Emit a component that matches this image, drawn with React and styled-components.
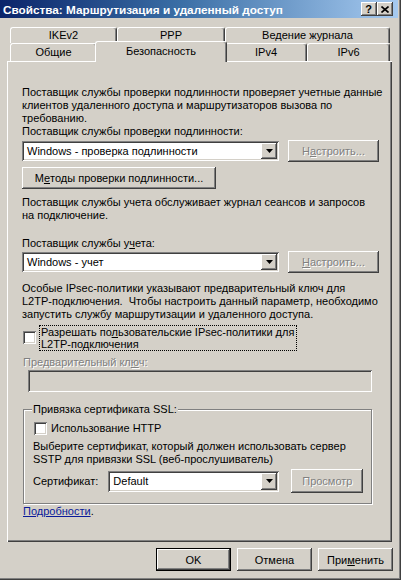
import React from "react";
import styled, { createGlobalStyle, css } from "styled-components";

const FACE = "#d4d0c8";
const RAISED = `inset -1px -1px #404040, inset 1px 1px #ffffff, inset -2px -2px #808080, inset 2px 2px ${FACE}`;
const SUNKEN = `inset 1px 1px #808080, inset -1px -1px #ffffff, inset 2px 2px #404040, inset -2px -2px ${FACE}`;

const Global = createGlobalStyle`
  html, body { margin: 0; padding: 0; background: ${FACE}; }
  body {
    font-family: "Liberation Sans", Arial, sans-serif;
    font-size: 11px;
    color: #000;
  }
  * { box-sizing: border-box; }
`;

const Window = styled.div`
  width: 401px;
  height: 580px;
  background: ${FACE};
  display: flex;
  flex-direction: column;
  overflow: hidden;
  box-shadow: inset -1px -1px #404040, inset -2px -2px #808080;
`;

const TitleBar = styled.div`
  height: 18px;
  margin-right: 3px;
  display: flex;
  align-items: center;
  justify-content: space-between;
  background: linear-gradient(to right, #0a246a 0%, #3a6ea5 45%, #a6caf0 100%);
  padding: 0 5px 0 3px;
`;

const TitleText = styled.div`
  color: #fff;
  font-weight: bold;
  font-size: 11.75px;
  white-space: nowrap;
`;

const TitleButtons = styled.div`
  display: flex;
`;

const TitleBtn = styled.div`
  width: 16px;
  height: 14px;
  background: ${FACE};
  box-shadow: ${RAISED};
  display: flex;
  align-items: center;
  justify-content: center;
  font-weight: bold;
  font-size: 11px;
  line-height: 14px;
  padding-right: 1px;
`;

const TabArea = styled.div`
  margin: 9px 0 0 10px;
  width: 380px;
  display: flex;
  flex-direction: column;
`;

const TabRow = styled.div`
  display: flex;
  height: ${(p) => p.$h}px;
`;

const Tab = styled.div`
  width: ${(p) => p.$w}px;
  height: 100%;
  background: ${FACE};
  border-top: 1px solid #fff;
  border-left: 1px solid #fff;
  border-right: 1px solid #404040;
  border-radius: 3px 3px 0 0;
  box-shadow: inset -1px 0 #808080;
  display: flex;
  align-items: center;
  justify-content: center;
  white-space: nowrap;
  line-height: 13px;
  padding-bottom: ${(p) => (p.$front ? 0 : 1)}px;
  ${(p) =>
    p.$active &&
    css`
      margin: -2px -2px 0;
      height: calc(100% + 3px);
      position: relative;
      z-index: 2;
      padding-bottom: 2px;
    `}
`;

const Panel = styled.div`
  margin-left: 7px;
  width: 385px;
  height: 481px;
  background: ${FACE};
  box-shadow: inset 1px 1px #ffffff, inset -1px -1px #404040, inset -2px -2px #808080;
  padding: 25px 0 0 15px;
  display: flex;
  flex-direction: column;
  align-items: flex-start;
`;

const Text = styled.div`
  line-height: 13px;
  white-space: nowrap;
  margin-top: ${(p) => p.$mt || 0}px;
  margin-left: ${(p) => p.$ml || 0}px;
  color: ${(p) => (p.$disabled ? "#808080" : "#000")};
  text-shadow: ${(p) => (p.$disabled ? "1px 1px #ffffff" : "none")};
`;

const Row = styled.div`
  display: flex;
  align-items: ${(p) => p.$align || "center"};
  margin-top: ${(p) => p.$mt || 0}px;
  margin-left: ${(p) => p.$ml || 0}px;
  height: ${(p) => (p.$h ? `${p.$h}px` : "auto")};
`;

const Combo = styled.div`
  width: ${(p) => p.$w}px;
  height: ${(p) => p.$h || 20}px;
  background: #fff;
  box-shadow: ${SUNKEN};
  display: flex;
  align-items: center;
  justify-content: space-between;
  padding: 2px;
`;

const ComboText = styled.span`
  padding-left: 3px;
  white-space: nowrap;
`;

const Arrow = styled.div`
  width: 16px;
  height: 100%;
  background: ${FACE};
  box-shadow: ${RAISED};
  display: flex;
  align-items: center;
  justify-content: center;
`;

const Button = styled.div`
  width: ${(p) => p.$w}px;
  height: ${(p) => p.$h || 22}px;
  margin-left: ${(p) => p.$ml || 0}px;
  margin-top: ${(p) => p.$mt || 0}px;
  background: ${FACE};
  box-shadow: ${RAISED};
  display: flex;
  align-items: center;
  justify-content: center;
  white-space: nowrap;
  color: ${(p) => (p.$disabled ? "#808080" : "#000")};
  text-shadow: ${(p) => (p.$disabled ? "1px 1px #ffffff" : "none")};
  ${(p) =>
    p.$default &&
    css`
      box-shadow: inset 0 0 0 1px #000, inset -2px -2px #404040, inset 2px 2px #ffffff,
        inset -3px -3px #808080;
    `}
`;

const Check = styled.div`
  width: 13px;
  height: 13px;
  flex: none;
  background: #fff;
  box-shadow: ${SUNKEN};
  margin-top: ${(p) => p.$mt || 0}px;
`;

const FocusLabel = styled.div`
  margin-left: 3px;
  border: 1px dotted #000;
  padding: 0 2px 0 1px;
  line-height: 12px;
  white-space: nowrap;
`;

const Field = styled.div`
  width: ${(p) => p.$w}px;
  height: 22px;
  margin: 1px 0 0 6px;
  background: ${FACE};
  box-shadow: ${SUNKEN};
`;

const Group = styled.fieldset`
  margin: 11px 0 0 1px;
  width: 349px;
  height: 101px;
  padding: 0 0 0 9px;
  border: 1px solid #808080;
  box-shadow: inset 1px 1px #ffffff, 1px 1px #ffffff;
  min-inline-size: auto;
  display: flex;
  flex-direction: column;
  align-items: flex-start;
`;

const Legend = styled.legend`
  padding: 0 1px 0 1px;
  margin-left: -1px;
  line-height: 13px;
  background: ${FACE};
`;

const Link = styled.div`
  margin: 1px 0 0 1px;
  line-height: 13px;
  white-space: nowrap;
`;

const LinkText = styled.span`
  color: #0a1a9a;
  text-decoration: underline;
`;

const Footer = styled.div`
  display: flex;
  justify-content: flex-end;
  gap: 6px;
  margin-top: 6px;
  padding-right: 8px;
`;

const DownArrow = () => (
  <svg width="7" height="4" viewBox="0 0 7 4">
    <polygon points="0,0 7,0 3.5,4" fill="#000" />
  </svg>
);

const ComboBox = ({ w, h, children }) => (
  <Combo $w={w} $h={h}>
    <ComboText>{children}</ComboText>
    <Arrow>
      <DownArrow />
    </Arrow>
  </Combo>
);

export default function App() {
  return (
    <>
      <Global />
      <Window>
        <TitleBar>
          <TitleText>Свойства: Маршрутизация и удаленный доступ</TitleText>
          <TitleButtons>
            <TitleBtn>?</TitleBtn>
            <TitleBtn>
              <svg width="8" height="7" viewBox="0 0 8 7">
                <path d="M0.5 0.5 L7.5 6.5 M7.5 0.5 L0.5 6.5" stroke="#000" strokeWidth="1.6" />
              </svg>
            </TitleBtn>
          </TitleButtons>
        </TitleBar>

        <TabArea>
          <TabRow $h={16}>
            <Tab $w={107}>IKEv2</Tab>
            <Tab $w={108}>PPP</Tab>
            <Tab $w={165}>Ведение журнала</Tab>
          </TabRow>
          <TabRow $h={18}>
            <Tab $w={87} $front>Общие</Tab>
            <Tab $w={132} $front $active>Безопасность</Tab>
            <Tab $w={82} $front>IPv4</Tab>
            <Tab $w={83} $front>IPv6</Tab>
          </TabRow>
        </TabArea>

        <Panel>
          <Text>
            Поставщик службы проверки подлинности проверяет учетные данные
            <br />
            клиентов удаленного доступа и маршрутизаторов вызова по
            <br />
            требованию.
          </Text>
          <Text>
            Поставщик службы прове<u>р</u>ки подлинности:
          </Text>
          <Row $mt={2}>
            <ComboBox w={257}>Windows - проверка подлинности</ComboBox>
            <Button $w={91} $ml={9} $disabled>
              Н<u>а</u>строить...
            </Button>
          </Row>
          <Button $w={194} $mt={5}>
            М<u>е</u>тоды проверки подлинности...
          </Button>
          <Text $mt={7}>
            Поставщик службы учета обслуживает журнал сеансов и запросов
            <br />
            на подключение.
          </Text>
          <Text $mt={15}>
            Поставщик службы у<u>ч</u>ета:
          </Text>
          <Row $mt={1}>
            <ComboBox w={257}>Windows - учет</ComboBox>
            <Button $w={91} $ml={9} $disabled>
              <u>Н</u>астроить...
            </Button>
          </Row>
          <Text $mt={9}>
            Особые IPsec-политики указывают предварительный ключ для
            <br />
            L2TP-подключения.&nbsp; Чтобы настроить данный параметр, необходимо
            <br />
            запустить службу маршрутизации и удаленного доступа.
          </Text>
          <Row $mt={4} $ml={1} $align="flex-start">
            <Check $mt={6} />
            <FocusLabel>
              Разрешать по<u>л</u>ьзовательские IPsec-политики для
              <br />
              L2TP-подключения
            </FocusLabel>
          </Row>
          <Text $mt={5} $ml={1} $disabled>
            Предварительный кл<u>ю</u>ч:
          </Text>
          <Field $w={344} />

          <Group>
            <Legend>Привязка сертификата SSL:</Legend>
            <Row $mt={6} $ml={1}>
              <Check />
              <Text $ml={4}>Использование HTTP</Text>
            </Row>
            <Text $mt={5}>
              Выберите сертификат, который должен использовать сервер
              <br />
              SSTP для привязки SSL (веб-прослушиватель)
            </Text>
            <Row $mt={3} $h={24}>
              <Text>Сертификат:</Text>
              <Row $ml={10}>
                <ComboBox w={171} h={21}>Default</ComboBox>
              </Row>
              <Button $w={72} $h={24} $ml={12} $disabled>
                Просмотр
              </Button>
            </Row>
          </Group>
          <Link>
            <LinkText>Подробности</LinkText>.
          </Link>
        </Panel>

        <Footer>
          <Button $w={75} $h={23} $default>
            OK
          </Button>
          <Button $w={75} $h={23}>
            Отмена
          </Button>
          <Button $w={75} $h={23}>
            При<u>м</u>енить
          </Button>
        </Footer>
      </Window>
    </>
  );
}
